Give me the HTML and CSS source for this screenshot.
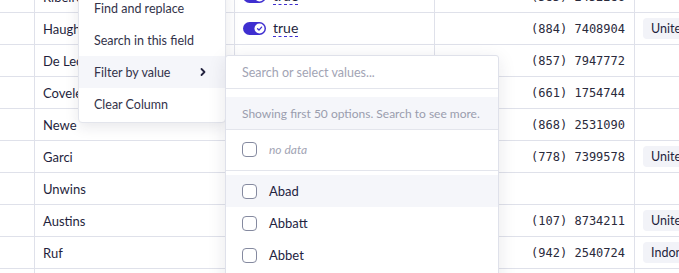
FILE: index.html
```html
<!DOCTYPE html>
<html lang="en">
<head>
  <meta charset="UTF-8" />
  <title>Grid filter</title>
  <link rel="stylesheet" href="styles.css">
</head>
<body>

<div class="view">

  <div class="grid">
    <div class="row">
      <div class="cell num"></div>
      <div class="cell name">Ribeiro</div>
      <div class="cell bool"><span class="toggle"><svg width="23" height="13" viewBox="0 0 23 13"><rect x="0" y="0" width="23" height="13" rx="6.5" fill="#3f2fd0"/><circle cx="16.5" cy="6.5" r="5" fill="#fff"/><path d="M14.6 6.8l1.4 1.3 2.6-3" fill="none" stroke="#3f2fd0" stroke-width="1.3" stroke-linecap="round" stroke-linejoin="round"/></svg></span><span class="bool-text">true</span></div>
      <div class="cell phone">(583) 2452286</div>
      <div class="cell country"></div>
    </div>
    <div class="row">
      <div class="cell num"></div>
      <div class="cell name">Haughton</div>
      <div class="cell bool"><span class="toggle"><svg width="23" height="13" viewBox="0 0 23 13"><rect x="0" y="0" width="23" height="13" rx="6.5" fill="#3f2fd0"/><circle cx="16.5" cy="6.5" r="5" fill="#fff"/><path d="M14.6 6.8l1.4 1.3 2.6-3" fill="none" stroke="#3f2fd0" stroke-width="1.3" stroke-linecap="round" stroke-linejoin="round"/></svg></span><span class="bool-text">true</span></div>
      <div class="cell phone">(884) 7408904</div>
      <div class="cell country"><span class="chip">United States</span></div>
    </div>
    <div class="row">
      <div class="cell num"></div>
      <div class="cell name">De Leon</div>
      <div class="cell bool"></div>
      <div class="cell phone">(857) 7947772</div>
      <div class="cell country"></div>
    </div>
    <div class="row">
      <div class="cell num"></div>
      <div class="cell name">Coveley</div>
      <div class="cell bool"></div>
      <div class="cell phone">(661) 1754744</div>
      <div class="cell country"></div>
    </div>
    <div class="row">
      <div class="cell num"></div>
      <div class="cell name">Newe</div>
      <div class="cell bool"></div>
      <div class="cell phone">(868) 2531090</div>
      <div class="cell country"></div>
    </div>
    <div class="row">
      <div class="cell num"></div>
      <div class="cell name">Garci</div>
      <div class="cell bool"></div>
      <div class="cell phone">(778) 7399578</div>
      <div class="cell country"><span class="chip">United States</span></div>
    </div>
    <div class="row">
      <div class="cell num"></div>
      <div class="cell name">Unwins</div>
      <div class="cell bool"></div>
      <div class="cell phone"></div>
      <div class="cell country"></div>
    </div>
    <div class="row">
      <div class="cell num"></div>
      <div class="cell name">Austins</div>
      <div class="cell bool"></div>
      <div class="cell phone">(107) 8734211</div>
      <div class="cell country"><span class="chip">United States</span></div>
    </div>
    <div class="row">
      <div class="cell num"></div>
      <div class="cell name">Ruf</div>
      <div class="cell bool"></div>
      <div class="cell phone">(942) 2540724</div>
      <div class="cell country"><span class="chip">Indonesia</span></div>
    </div>
    <div class="row">
      <div class="cell num"></div>
      <div class="cell name"></div>
      <div class="cell bool"></div>
      <div class="cell phone"></div>
      <div class="cell country"></div>
    </div>
  </div>

  <!-- column context menu -->
  <div class="menu">
    <div class="menu-item">Find and replace</div>
    <div class="menu-item">Search in this field</div>
    <div class="menu-item active">Filter by value
      <svg class="chevron" width="8" height="10" viewBox="0 0 8 10"><path d="M2.5 2l3 3-3 3" fill="none" stroke="#23233f" stroke-width="1.8" stroke-linecap="round" stroke-linejoin="round"/></svg>
    </div>
    <div class="menu-item">Clear Column</div>
  </div>

  <!-- filter by value submenu -->
  <div class="values">
    <div class="search">Search or select values...</div>
    <div class="notice">Showing first 50 options. Search to see more.</div>
    <div class="empty-opt">
      <div class="option"><span class="check"></span><span class="empty-label">no data</span></div>
    </div>
    <div class="options">
      <div class="option hover"><span class="check"></span>Abad</div>
      <div class="option"><span class="check"></span>Abbatt</div>
      <div class="option"><span class="check"></span>Abbet</div>
      <div class="option"><span class="check"></span>Abbey</div>
    </div>
  </div>

</div>

</body>
</html>
```

FILE: styles.css
```css
body {
  margin: 0;
  font-family: Lato, "Open Sans", sans-serif;
  font-size: 13px;
  color: #1f1f3d;
  background: #fff;
}
.view {
  position: relative;
  width: 679px;
  height: 273px;
  overflow: hidden;
}
.grid {
  margin-top: -19px;
}
.row {
  display: grid;
  grid-template-columns: 35px 200px 200px 200px 1fr;
  height: 32px;
}
.cell {
  border-right: 1px solid #dfe1ea;
  border-bottom: 1px solid #dfe1ea;
  display: flex;
  align-items: center;
  white-space: nowrap;
  overflow: hidden;
}
.name {
  padding-left: 8px;
}
.bool {
  padding-left: 8px;
}
.toggle {
  display: inline-flex;
  margin-right: 7px;
}
.bool-text {
  font-size: 14px;
  border-bottom: 1px dashed #3f2fd0;
  line-height: 16px;
}
.phone {
  justify-content: flex-end;
  padding-right: 9px;
  font-family: "DejaVu Sans Mono", monospace;
  font-size: 12px;
  color: #2a2a3c;
}
.country {
  border-right: none;
  padding-left: 8px;
}
.chip {
  background: #f2f3f8;
  border-radius: 4px;
  padding: 3px 8px;
  font-size: 12.5px;
}

/* context menu */
.menu {
  position: absolute;
  left: 78px;
  top: -13px;
  width: 146px;
  padding: 4px 0 2px;
  background: #fff;
  border: 1px solid #e3e5ec;
  border-radius: 4px;
  box-shadow: 0 4px 14px rgba(30, 30, 60, 0.1);
}
.menu-item {
  height: 32px;
  display: flex;
  align-items: center;
  justify-content: space-between;
  padding: 0 18px 0 15px;
  font-size: 12.5px;
  color: #33334a;
}
.menu-item.active {
  background: #f5f6fa;
}
.chevron {
  display: block;
}

/* values dropdown */
.values {
  position: absolute;
  left: 225px;
  top: 55px;
  width: 272px;
  height: 240px;
  background: #fff;
  border: 1px solid #dfe1ea;
  border-radius: 3px;
  box-shadow: 0 4px 18px rgba(30, 30, 60, 0.1);
}
.search {
  height: 32px;
  display: flex;
  align-items: center;
  padding: 0 16px;
  font-size: 12.5px;
  color: #a2a4b4;
  border-bottom: 1px solid #e3e5ec;
}
.notice {
  margin-top: 8px;
  height: 32px;
  display: flex;
  align-items: center;
  padding: 0 16px;
  font-size: 12px;
  color: #9a9dae;
  background: #f5f6fa;
  border-bottom: 1px solid #e3e5ec;
}
.empty-opt {
  padding: 3px 0 5px;
  border-bottom: 1px solid #e3e5ec;
}
.options {
  padding-top: 4px;
}
.option {
  height: 32px;
  display: flex;
  align-items: center;
  padding: 0 16px;
  color: #23233f;
}
.option.hover {
  background: #f5f6fa;
}
.check {
  width: 13px;
  height: 13px;
  border: 1.5px solid #858aa0;
  border-radius: 4px;
  margin-right: 12px;
  background: #fff;
}
.empty-label {
  font-style: italic;
  font-size: 12px;
  color: #a2a4b4;
}
```
